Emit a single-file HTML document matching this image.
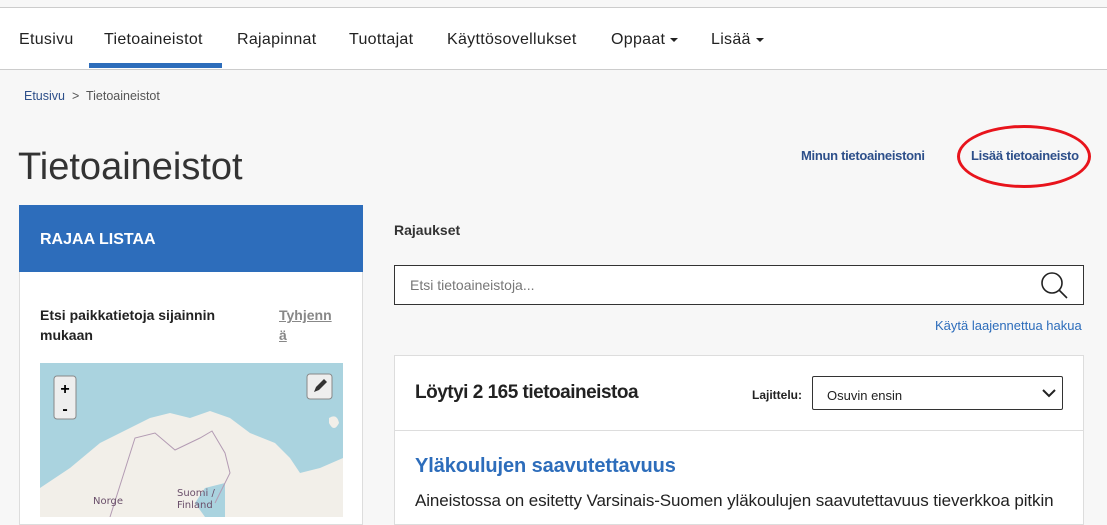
<!DOCTYPE html>
<html><head><meta charset="utf-8"><style>
body{margin:0;width:1107px;height:517px;overflow:hidden;background:#f7f7f7;font-family:"Liberation Sans",sans-serif;position:relative;color:#222}
.a{position:absolute;white-space:nowrap}
.nav{position:absolute;left:0;top:7px;width:1107px;height:61px;background:#fff;border-top:1px solid #ccc;border-bottom:1px solid #ccc}
.nav span{position:absolute;top:23px;font-size:16px;color:#222;letter-spacing:0.3px}
.car{display:inline-block;border-left:4px solid transparent;border-right:4px solid transparent;border-top:4px solid #222;vertical-align:middle;margin-left:5px}
</style></head><body>
<div class="nav">
<span style="left:19px">Etusivu</span>
<span style="left:104px">Tietoaineistot</span>
<span style="left:237px">Rajapinnat</span>
<span style="left:349px">Tuottajat</span>
<span style="left:447px">Käyttösovellukset</span>
<span style="left:611px">Oppaat<i class="car"></i></span>
<span style="left:711px">Lisää<i class="car"></i></span>
<div style="position:absolute;left:89px;top:55px;width:133px;height:5px;background:#2d6dbb"></div>
</div>
<div class="a" style="left:24px;top:89px;font-size:12.5px;color:#2d4f8a">Etusivu <span style="color:#555">&nbsp;&gt;&nbsp; Tietoaineistot</span></div>
<div class="a" style="left:18px;top:146px;font-size:38px;color:#333;letter-spacing:0px">Tietoaineistot</div>
<div class="a" style="left:801px;top:148px;font-size:13px;font-weight:bold;color:#2d4f8a;letter-spacing:-0.3px">Minun tietoaineistoni</div>
<div class="a" style="left:971px;top:148px;font-size:13px;font-weight:bold;color:#2d4f8a;letter-spacing:-0.3px">Lisää tietoaineisto</div>
<div class="a" style="left:957px;top:125px;width:128px;height:57px;border:3px solid #e8141c;border-radius:50%"></div>

<div class="a" style="left:19px;top:205px;width:344px;height:320px;background:#fff;border:1px solid #ddd;box-sizing:border-box"></div>
<div class="a" style="left:19px;top:205px;width:344px;height:67px;background:#2d6dbb"></div>
<div class="a" style="left:40px;top:231px;font-size:16px;font-weight:bold;color:#fff">RAJAA LISTAA</div>
<div class="a" style="left:40px;top:305px;font-size:14px;font-weight:bold;line-height:20px;color:#222;white-space:normal;width:200px">Etsi paikkatietoja sijainnin mukaan</div>
<div class="a" style="left:279px;top:305px;font-size:14px;font-weight:bold;line-height:20px;color:#888;text-decoration:underline">Tyhjenn<br>ä</div>
<svg class="a" style="left:40px;top:363px" width="303" height="154">
<rect width="303" height="154" fill="#aad3df"/>
<path d="M0 154 L0 125 L30 105 L60 80 L90 65 L110 55 L130 50 L150 55 L170 48 L190 55 L210 70 L235 80 L250 95 L260 110 L280 105 L303 95 L303 154 Z" fill="#f2efe9"/>
<path d="M165 154 L155 140 L165 125 L185 120 L185 154Z" fill="#aad3df"/>
<path d="M289 55 q8 -5 10 5 q-5 10 -10 0z" fill="#f2efe9"/>
<path d="M70 154 L95 75 L115 70 L135 87 L160 75 L172 68 L185 90 L190 110 L175 140" fill="none" stroke="#b39bb3" stroke-width="1"/>
<text x="53" y="141" font-size="10" fill="#6a4f6a" font-family="DejaVu Sans">Norge</text>
<text x="137" y="133" font-size="10" fill="#6a4f6a" font-family="DejaVu Sans">Suomi /</text>
<text x="137" y="145" font-size="10" fill="#6a4f6a" font-family="DejaVu Sans">Finland</text>
<rect x="14" y="13" width="22" height="43" rx="3" fill="#eee" stroke="#888"/>
<text x="25" y="31" font-size="16" font-weight="bold" text-anchor="middle">+</text>
<text x="25" y="51" font-size="16" font-weight="bold" text-anchor="middle">-</text>
<rect x="267" y="11" width="25" height="25" rx="3" fill="#eee" stroke="#888"/>
<path d="M274 29 l2 -5 l8 -8 l3 3 l-8 8z" fill="#333"/>
</svg>

<div class="a" style="left:394px;top:222px;font-size:14px;font-weight:bold;color:#333">Rajaukset</div>
<div class="a" style="left:394px;top:265px;width:690px;height:40px;border:1px solid #333;background:#fff;box-sizing:border-box"></div>
<div class="a" style="left:410px;top:277px;font-size:14px;color:#777">Etsi tietoaineistoja...</div>
<svg class="a" style="left:1039px;top:270px" width="32" height="30"><circle cx="13" cy="13" r="10" fill="none" stroke="#222" stroke-width="1.6"/><path d="M20 20 L28 28" stroke="#222" stroke-width="1.6"/></svg>
<div class="a" style="left:935px;top:318px;font-size:13px;color:#2d6dbb">Käytä laajennettua hakua</div>

<div class="a" style="left:394px;top:355px;width:690px;height:170px;background:#fff;border:1px solid #ddd;box-sizing:border-box"></div>
<div class="a" style="left:394px;top:430px;width:690px;height:1px;background:#ddd"></div>
<div class="a" style="left:415px;top:382px;font-size:19px;font-weight:bold;color:#222;letter-spacing:-0.5px">Löytyi 2 165 tietoaineistoa</div>
<div class="a" style="left:752px;top:388px;font-size:12px;font-weight:bold;color:#222">Lajittelu:</div>
<div class="a" style="left:812px;top:376px;width:251px;height:34px;border:1px solid #333;border-radius:2px;box-sizing:border-box;background:#fff"></div>
<div class="a" style="left:827px;top:388px;font-size:13px;color:#222">Osuvin ensin</div>
<svg class="a" style="left:1042px;top:388px" width="14" height="10"><path d="M1 2 L7 8 L13 2" fill="none" stroke="#222" stroke-width="2"/></svg>
<div class="a" style="left:415px;top:455px;font-size:20px;font-weight:bold;color:#2d6dbb;letter-spacing:-0.1px">Yläkoulujen saavutettavuus</div>
<div class="a" style="left:415px;top:491px;font-size:17px;color:#222;letter-spacing:-0.1px">Aineistossa on esitetty Varsinais-Suomen yläkoulujen saavutettavuus tieverkkoa pitkin</div>
</body></html>
